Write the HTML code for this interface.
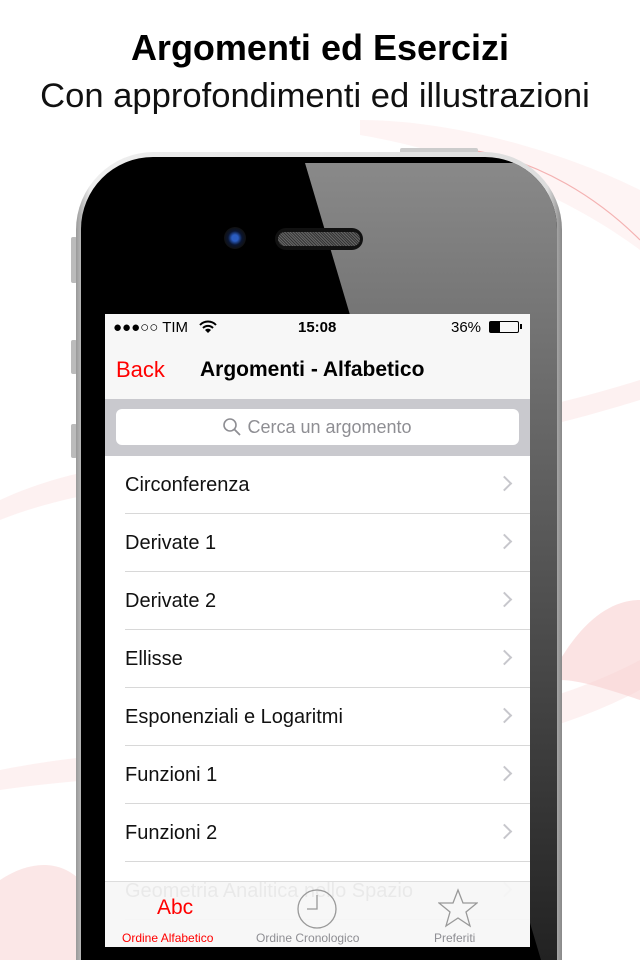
<!DOCTYPE html>
<html><head><meta charset="utf-8"><style>
*{margin:0;padding:0;box-sizing:border-box}
html,body{width:640px;height:960px;overflow:hidden}
body{background:#fff;font-family:"Liberation Sans",sans-serif;position:relative}
#wrap{position:absolute;left:0;top:0;width:640px;height:960px;overflow:hidden}
.abs{position:absolute}
h1{position:absolute;top:27px;width:640px;text-align:center;font-size:36px;font-weight:bold;color:#000}
h2{position:absolute;top:77px;left:-5px;width:640px;text-align:center;font-size:34.6px;font-weight:normal;color:#111}
.row{position:absolute;left:0;width:425px;height:58px;font-size:20px;color:#111}
.row span{position:absolute;left:20px;top:18px}
.row i{position:absolute;right:20px;top:22px;width:11px;height:11px;border-right:2px solid #c7c7cc;border-top:2px solid #c7c7cc;transform:rotate(45deg)}
.row b{position:absolute;left:20px;right:0;bottom:0;height:1px;background:#d8d8d8}
</style></head><body><div id="wrap">
<svg class="abs" style="left:0;top:0" width="640" height="960">
<path d="M0 500 C150 430 350 470 640 380 L640 400 C350 490 150 460 0 520Z" fill="#fdeeee" opacity=".8"/>
<path d="M0 770 C200 730 450 760 640 660 L640 690 C450 790 200 760 0 790Z" fill="#fdeeee" opacity=".8"/>
<path d="M560 660 C590 610 620 600 640 600 L640 700 C610 690 580 680 560 680Z" fill="#f8d0d0" opacity=".6"/>
<path d="M0 880 C30 860 60 860 80 880 L80 960 L0 960Z" fill="#f8d0d0" opacity=".5"/>
<path d="M470 150 C540 160 600 200 640 240" stroke="#d22" stroke-width="1.2" fill="none"/>
<path d="M360 120 C450 120 560 150 640 190 L640 250 C560 190 450 150 360 135Z" fill="#fdf0f0" opacity=".7"/>
</svg>
<h1>Argomenti ed Esercizi</h1>
<h2>Con approfondimenti ed illustrazioni</h2>
<div class="abs" style="left:71px;top:237px;width:6px;height:46px;background:#bbb;border-radius:2px"></div>
<div class="abs" style="left:71px;top:340px;width:6px;height:34px;background:#bbb;border-radius:2px"></div>
<div class="abs" style="left:71px;top:424px;width:6px;height:34px;background:#bbb;border-radius:2px"></div>
<div class="abs" style="left:400px;top:148px;width:78px;height:6px;background:#ccc;border-radius:2px"></div>
<div class="abs" style="left:76px;top:152px;width:486px;height:808px;border-radius:78px 78px 0 0;background:linear-gradient(90deg,#999,#eee 3%,#ddd 97%,#888);"></div>
<div class="abs" style="left:81px;top:157px;width:476px;height:803px;border-radius:72px 72px 0 0;background:#000;overflow:hidden">
 <div class="abs" style="left:0;top:0;width:476px;height:803px;background:linear-gradient(180deg,#8a8a8a,#555 50%,#222);clip-path:polygon(224px 6px,476px 6px,476px 803px,460px 803px)"></div>
</div>
<div class="abs" style="left:224px;top:227px;width:22px;height:22px;border-radius:50%;background:radial-gradient(#2a5cc0 20%,#0a1530 45%,#111 70%)"></div>
<div class="abs" style="left:275px;top:228px;width:88px;height:22px;border-radius:11px;background:#111"></div>
<div class="abs" style="left:278px;top:232px;width:82px;height:14px;border-radius:7px;background:repeating-linear-gradient(45deg,#666 0 1px,#333 1px 2px)"></div>
<div class="abs" style="left:105px;top:314px;width:425px;height:633px;background:#fff;overflow:hidden">
 <div class="abs" style="left:0;top:0;width:425px;height:85px;background:#f7f7f7"></div>
 <div class="abs" style="left:8px;top:5px;font-size:15px;color:#000">●●●○○ TIM</div>
 <svg class="abs" style="left:94px;top:6px" width="18" height="13"><path d="M1 5 A11 11 0 0 1 17 5" stroke="#000" stroke-width="2" fill="none"/><path d="M4 8 A7 7 0 0 1 14 8" stroke="#000" stroke-width="2" fill="none"/><path d="M9 13 L6 10 A4 4 0 0 1 12 10Z" fill="#000"/></svg>
 <div class="abs" style="left:193px;top:5px;font-size:15px;font-weight:bold">15:08</div>
 <div class="abs" style="left:346px;top:5px;font-size:15px">36%</div>
 <div class="abs" style="left:384px;top:7px;width:30px;height:12px;border:1px solid #000;border-radius:2px"><div style="width:10px;height:10px;background:#000"></div></div>
 <div class="abs" style="left:415px;top:10px;width:2px;height:5px;background:#000"></div>
 <div class="abs" style="left:11px;top:43px;font-size:22px;color:#f00">Back</div>
 <div class="abs" style="left:95px;top:44px;font-size:21px;font-weight:bold">Argomenti - Alfabetico</div>
 <div class="abs" style="left:0;top:85px;width:425px;height:57px;background:#c9c9ce"></div>
 <div class="abs" style="left:11px;top:95px;width:403px;height:36px;background:#fff;border-radius:6px;color:#8e8e93;font-size:18px;text-align:center;line-height:36px">
  <svg style="vertical-align:-3px;margin-right:6px" width="18" height="18"><circle cx="7" cy="7" r="6" stroke="#8e8e93" stroke-width="1.6" fill="none"/><path d="M11.5 11.5 L17 17" stroke="#8e8e93" stroke-width="1.8"/></svg>Cerca un argomento</div>
 <div class="row" style="top:142px"><span>Circonferenza</span><i></i><b></b></div>
 <div class="row" style="top:200px"><span>Derivate 1</span><i></i><b></b></div>
 <div class="row" style="top:258px"><span>Derivate 2</span><i></i><b></b></div>
 <div class="row" style="top:316px"><span>Ellisse</span><i></i><b></b></div>
 <div class="row" style="top:374px"><span>Esponenziali e Logaritmi</span><i></i><b></b></div>
 <div class="row" style="top:432px"><span>Funzioni 1</span><i></i><b></b></div>
 <div class="row" style="top:490px"><span>Funzioni 2</span><i></i><b></b></div>
 <div class="row" style="top:548px"><span>Geometria Analitica nello Spazio</span><i></i><b></b></div>
 <div class="abs" style="left:0;top:567px;width:425px;height:66px;background:rgba(247,247,247,.94);border-top:1px solid #ddd"></div>
 <div class="abs" style="left:52px;top:582px;font-size:21px;color:#f00">Abc</div>
 <div class="abs" style="left:17px;top:617px;font-size:12px;color:#f00">Ordine Alfabetico</div>
 <svg class="abs" style="left:192px;top:575px" width="42" height="42"><circle cx="20" cy="20" r="19" stroke="#999" stroke-width="1.3" fill="none"/><path d="M20 6 V20 H10" stroke="#999" stroke-width="1.3" fill="none"/></svg>
 <div class="abs" style="left:151px;top:617px;font-size:12px;color:#8e8e93">Ordine Cronologico</div>
 <svg class="abs" style="left:333px;top:574px" width="40" height="40"><path d="M20 2 L25 15 L39 15 L28 24 L32 38 L20 30 L8 38 L12 24 L1 15 L15 15Z" stroke="#999" stroke-width="1.3" fill="none"/></svg>
 <div class="abs" style="left:329px;top:617px;font-size:12px;color:#8e8e93">Preferiti</div>
</div>
</div></body></html>
